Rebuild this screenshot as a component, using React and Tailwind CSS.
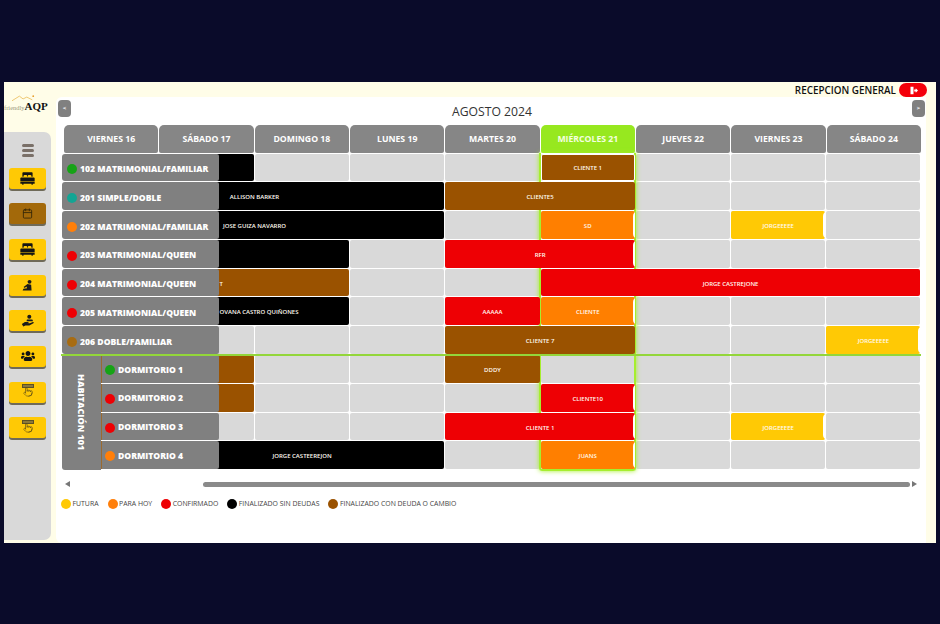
import React from "react";
import { FaUsers } from "react-icons/fa";
import { Calendar, Pointer } from "lucide-react";

const days = ["VIERNES 16", "SÁBADO 17", "DOMINGO 18", "LUNES 19", "MARTES 20", "MIÉRCOLES 21", "JUEVES 22", "VIERNES 23", "SÁBADO 24"];
const brown = "bg-[#9a5200]";
const black = "bg-black";
const red = "bg-[#ee0004]";
const orange = "bg-[#ff7f00]";
const yellow = "bg-[#ffc905]";

const bars = [
  { c: "col-start-1 col-span-2 row-start-1", k: black, t: "" },
  { c: "col-start-6 col-span-1 row-start-1", k: brown + " border border-white", t: "CLIENTE 1" },
  { c: "col-start-1 col-span-4 row-start-2", k: black, t: "ALLISON BARKER" },
  { c: "col-start-5 col-span-2 row-start-2", k: brown, t: "CLIENTE5" },
  { c: "col-start-1 col-span-4 row-start-3", k: black, t: "JOSE GUIZA NAVARRO" },
  { c: "col-start-6 col-span-1 row-start-3", k: orange, t: "SD", n: 1 },
  { c: "col-start-8 col-span-1 row-start-3", k: yellow, t: "JORGEEEEE", n: 1 },
  { c: "col-start-1 col-span-3 row-start-4", k: black, t: "" },
  { c: "col-start-5 col-span-2 row-start-4", k: red, t: "RFR", n: 1 },
  { c: "col-start-1 col-span-3 row-start-5", k: brown, t: "T", left: 1 },
  { c: "col-start-6 col-span-4 row-start-5", k: red, t: "JORGE CASTREJONE" },
  { c: "col-start-1 col-span-3 row-start-6", k: black, t: "OVANA CASTRO QUIÑONES", left: 1 },
  { c: "col-start-5 col-span-1 row-start-6", k: red, t: "AAAAA" },
  { c: "col-start-6 col-span-1 row-start-6", k: orange, t: "CLIENTE", n: 1 },
  { c: "col-start-5 col-span-2 row-start-7", k: brown, t: "CLIENTE 7" },
  { c: "col-start-9 col-span-1 row-start-7", k: yellow, t: "JORGEEEEE", n: 1 },
  { c: "col-start-1 col-span-2 row-start-8", k: brown, t: "" },
  { c: "col-start-5 col-span-1 row-start-8", k: brown, t: "DDDY" },
  { c: "col-start-1 col-span-2 row-start-9", k: brown, t: "" },
  { c: "col-start-6 col-span-1 row-start-9", k: red, t: "CLIENTE10", n: 1 },
  { c: "col-start-5 col-span-2 row-start-10", k: red, t: "CLIENTE 1", n: 1 },
  { c: "col-start-8 col-span-1 row-start-10", k: yellow, t: "JORGEEEEE", n: 1 },
  { c: "col-start-2 col-span-3 row-start-11", k: black, t: "JORGE CASTEEREJON" },
  { c: "col-start-6 col-span-1 row-start-11", k: orange, t: "JUANS", n: 1 },
];

const rooms = [
  { c: "row-start-1", d: "bg-[#16a316]", t: "102 MATRIMONIAL/FAMILIAR" },
  { c: "row-start-2", d: "bg-[#13a594]", t: "201 SIMPLE/DOBLE" },
  { c: "row-start-3", d: "bg-[#ff7f0a]", t: "202 MATRIMONIAL/FAMILIAR" },
  { c: "row-start-4", d: "bg-[#ee0004]", t: "203 MATRIMONIAL/QUEEN" },
  { c: "row-start-5", d: "bg-[#ee0004]", t: "204 MATRIMONIAL/QUEEN" },
  { c: "row-start-6", d: "bg-[#ee0004]", t: "205 MATRIMONIAL/QUEEN" },
  { c: "row-start-7", d: "bg-[#a86c12]", t: "206 DOBLE/FAMILIAR" },
];
const dorms = [
  { c: "row-start-8", d: "bg-[#16a316]", t: "DORMITORIO 1" },
  { c: "row-start-9", d: "bg-[#ee0004]", t: "DORMITORIO 2" },
  { c: "row-start-10", d: "bg-[#ee0004]", t: "DORMITORIO 3" },
  { c: "row-start-11", d: "bg-[#ff7f0a]", t: "DORMITORIO 4" },
];
const legend = [
  ["bg-[#ffc905]", "FUTURA"],
  ["bg-[#ff7f0a]", "PARA HOY"],
  ["bg-[#ee0004]", "CONFIRMADO"],
  ["bg-black", "FINALIZADO SIN DEUDAS"],
  ["bg-[#9a5200]", "FINALIZADO CON DEUDA O CAMBIO"],
];

const Bed = () => (
  <svg viewBox="0 0 16 14" className="w-[15px] h-[13px]" fill="#141414">
    <path d="M2.5 1.2C2.5.6 3 .2 3.6.2h8.8c.6 0 1.1.4 1.1 1V5H12.2V4.2c0-.6-.4-1-1-1H9.3c-.6 0-1 .4-1 1V5H7.7v-.8c0-.6-.4-1-1-1H4.8c-.6 0-1 .4-1 1V5H2.5z" />
    <path d="M1.5 5.8h13c.7 0 1.2.5 1.2 1.2v2.6H.3V7c0-.7.5-1.2 1.2-1.2z" />
    <path d="M.3 10.2h15.4v2.4h-2v1h-1.4v-1H3.7v1H2.3v-1h-2z" />
  </svg>
);
const Person = () => (
  <svg viewBox="0 0 16 16" className="w-[13px] h-[13px]" fill="#1a1a1a">
    <circle cx="10.5" cy="3.5" r="2.4" />
    <path d="M8 6 L12.5 7 L13 14 L2 14 L3 12 L7.5 11.5 L6.6 9.2 L4.6 11 L3.2 9.8Z" />
  </svg>
);
const HandPerson = () => (
  <svg viewBox="0 0 16 16" className="w-[14px] h-[14px]" fill="#1a1a1a">
    <circle cx="9.5" cy="3.2" r="2.3" />
    <path d="M6.8 6.4h5.4c.8 0 1.3.6 1.3 1.3v.6H6.3z" />
    <path d="M1 11.5 L4.5 9 H8 c1 0 1 1.4 0 1.4 H6.5 L10 10.6 L13.6 9.2 c1-.3 1.4.8.6 1.3 L9.5 13 H5 L2.6 14.4z" />
  </svg>
);
const Sign = () => (
  <div className="w-[14px] h-[16px] flex flex-col items-center">
    <div className="w-[12px] h-[4px] bg-[#8d7a3a] border border-[#5d5225]" />
    <Pointer size={10} strokeWidth={1.5} className="text-[#5a4a18] -mt-[1px] ml-[1px]" />
  </div>
);

const side = [
  { i: <Bed /> },
  { i: <Calendar size={11} strokeWidth={2} color="#3a2a08" />, brown: true },
  { i: <Bed /> },
  { i: <Person /> },
  { i: <HandPerson /> },
  { i: <FaUsers size={14} color="#141414" /> },
  { i: <Sign /> },
  { i: <Sign /> },
];

const open = { fontFamily: '"Open Sans", "Liberation Sans", sans-serif' };

export default function App() {
  return (
    <div className="w-[940px] h-[624px] bg-[#0a0b2a] pt-[82px] pl-[4px] overflow-hidden" style={open}>
      <div className="w-[932px] h-[461px] bg-[#fffde8] flex flex-col">
        <div className="h-[15px] flex items-center justify-end pr-[9px] gap-[3px]">
          <span className="text-[9.9px] font-semibold text-[#111] pt-[1px]">RECEPCION GENERAL</span>
          <div className="w-[28px] h-[14px] mt-[1px] rounded-full bg-[#f40009] flex items-center justify-center">
            <svg viewBox="0 0 12 12" className="w-[9px] h-[9px]" fill="#fff">
              <path d="M2 1h4v10H2z" />
              <path d="M7 4.8h2V3l3 3-3 3V7.2H7z" />
            </svg>
          </div>
        </div>
        <div className="flex-1 flex min-h-0">
          <aside className="w-[47px] flex flex-col">
            <div className="h-[35px] relative">
              <div className="flex items-baseline mt-[1px] h-[14px] w-[46px] whitespace-nowrap" style={{ fontFamily: '"Liberation Serif", serif' }}>
                <span className="text-[6.5px] text-[#9a9a80]">friendly</span>
                <span className="text-[11px] font-bold text-[#111]">AQP</span>
              </div>
              <svg viewBox="0 0 26 8" className="absolute left-[8px] top-[-3px] w-[24px] h-[8px]" fill="none" stroke="#e8b64a" strokeWidth="0.8">
                <path d="M0 7 L8 2 L12 5 L16 3 L22 6" />
                <circle cx="23" cy="2" r="1" fill="#e8a030" stroke="none" />
              </svg>
            </div>
            <div className="flex-1 bg-[#d9d9d9] rounded-tr-[7px] rounded-br-[7px] mb-[3px] flex flex-col items-center pt-[12px]">
              <div className="flex flex-col gap-[2.5px] mb-[11px]">
                <div className="w-[12px] h-[2.5px] bg-[#7a7068] rounded-full" />
                <div className="w-[12px] h-[2.5px] bg-[#7a7068] rounded-full" />
                <div className="w-[12px] h-[2.5px] bg-[#7a7068] rounded-full" />
              </div>
              <div className="flex flex-col gap-[14.7px]">
                {side.map((s, i) => (
                  <div
                    key={i}
                    className={`w-[37px] h-[21px] rounded-[3px] flex items-center justify-center shadow-[0_2px_0_#6f6a58] ${s.brown ? "bg-[#a3690a]" : "bg-[#ffc905]"}`}
                  >
                    {s.i}
                  </div>
                ))}
              </div>
            </div>
          </aside>
          <main className="w-[870px] ml-[5px] bg-white rounded-tl-[6px] rounded-bl-[6px] flex flex-col">
            <div className="h-[28px] flex items-start justify-between pl-[2px] pr-[1px] pt-[3px]">
              <div className="w-[13px] h-[17px] rounded-[4px] bg-[#808080] text-white text-[6px] font-bold flex items-center justify-center">&lt;</div>
              <div className="text-[12.2px] text-[#333] leading-[18px] pt-[3px] pl-[1px]">AGOSTO 2024</div>
              <div className="w-[13px] h-[17px] rounded-[4px] bg-[#808080] text-white text-[6px] font-bold flex items-center justify-center">&gt;</div>
            </div>
            <div className="ml-[8px] w-[857px] grid grid-cols-9 gap-x-[1px] h-[28px]">
              {days.map((d) => (
                <div
                  key={d}
                  className={`rounded-t-[5px] rounded-b-[2px] pt-[2px] flex items-center justify-center text-[8.7px] font-bold ${d.startsWith("MIÉ") ? "bg-[#97e81f] text-[#f4ffe0]" : "bg-[#868686] text-white"}`}
                >
                  {d}
                </div>
              ))}
            </div>
            <div className="ml-[8px] w-[857px] grid grid-cols-9 grid-rows-[repeat(11,28.8px)]">
              {Array.from({ length: 99 }).map((_, i) => (
                <div
                  key={i}
                  className="bg-[#d9d9d9] m-[0.5px] rounded-[2px]"
                  style={{ gridColumnStart: (i % 9) + 1, gridRowStart: Math.floor(i / 9) + 1 }}
                />
              ))}
              <div className="col-start-6 row-start-1 row-span-11 -mx-[1px] -mb-[1px] border-2 border-t-0 border-[#a6ee2e] rounded-b-[3px] shadow-[0_0_5px_#a6ee2e] z-[1]" />
              {bars.map((b, i) => (
                <div
                  key={i}
                  className={`${b.c} ${b.k} mx-[0.5px] my-[0.5px] pt-[3px] rounded-[2px] z-[2] relative flex items-center overflow-hidden text-[6px] font-semibold text-[#fffaf0] whitespace-nowrap ${b.left ? "justify-start pl-[155px]" : "justify-center"}`}
                >
                  {b.t}
                  {b.n ? <span className="absolute right-[-3px] top-0 bottom-0 w-[5px] rounded-l-full bg-white" /> : null}
                </div>
              ))}
              {rooms.map((r) => (
                <div
                  key={r.t}
                  className={`${r.c} col-start-1 col-span-2 z-[3] w-[157px] -ml-[2.5px] my-[0.5px] pt-[4px] bg-[#808080] rounded-l-[3px] rounded-r-[2px] flex items-center pl-[5px] gap-[3.5px]`}
                >
                  <span className={`w-[10px] h-[10px] rounded-full shrink-0 ${r.d}`} />
                  <span className="text-[8.6px] font-extrabold text-white whitespace-nowrap">{r.t}</span>
                </div>
              ))}
              <div className="col-start-1 row-start-8 row-span-4 z-[3] w-[39px] -ml-[2.5px] bg-[#808080] rounded-bl-[3px] flex items-center justify-center">
                <span className="[writing-mode:vertical-rl] text-[9px] font-extrabold text-white whitespace-nowrap">HABITACIÓN 101</span>
              </div>
              {dorms.map((r) => (
                <div
                  key={r.t}
                  className={`${r.c} col-start-1 col-span-2 z-[3] w-[118px] ml-[37px] my-[0.5px] pt-[2px] bg-[#808080] border-l border-[#9a6a30] rounded-r-[2px] flex items-center pl-[3px] gap-[3px]`}
                >
                  <span className={`w-[10px] h-[10px] rounded-full shrink-0 ${r.d}`} />
                  <span className="text-[8.6px] font-extrabold text-white whitespace-nowrap">{r.t}</span>
                </div>
              ))}
              <div className="col-start-1 col-span-9 row-start-8 h-[2px] -mt-[1px] -ml-[3px] bg-[#93d63a] z-[4]" />
            </div>
            <div className="ml-[8px] mt-[11px] w-[857px] h-[7px] flex items-center">
              <span className="w-0 h-0 border-y-[3.5px] border-y-transparent border-r-[5px] border-r-[#777] ml-[1px]" />
              <div className="flex-1 ml-[133px] mr-[2px] h-[5px] rounded-full bg-[#8a8a8a]" />
              <span className="w-0 h-0 border-y-[3.5px] border-y-transparent border-l-[5px] border-l-[#777] mr-[4px]" />
            </div>
            <div className="ml-[5px] mt-[11px] flex items-center gap-[9px]">
              {legend.map(([c, t]) => (
                <div key={t} className="flex items-center gap-[1.5px]">
                  <span className={`w-[10px] h-[10px] rounded-full ${c}`} />
                  <span className="text-[6.9px] text-[#444] whitespace-nowrap">{t}</span>
                </div>
              ))}
            </div>
          </main>
        </div>
      </div>
    </div>
  );
}
